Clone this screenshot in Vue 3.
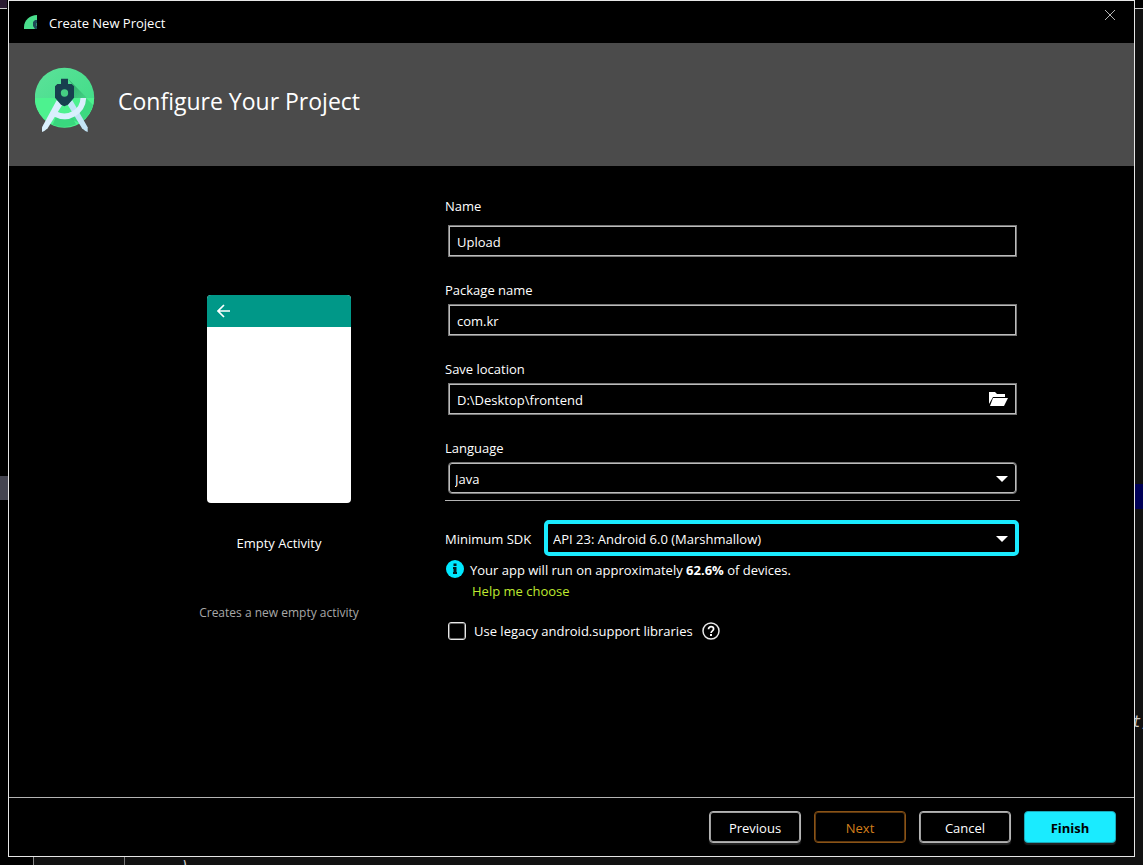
<script setup>
import { ref } from 'vue'

const name = ref('Upload')
const packageName = ref('com.kr')
const location = ref('D:\\Desktop\\frontend')
const language = ref('Java')
const sdk = ref('API 23: Android 6.0 (Marshmallow)')
const legacy = ref(false)
</script>

<template>
  <div class="desktop">
    <div class="backdrop" aria-hidden="true">
      <div class="edge edge-left"></div>
      <div class="edge edge-right"><span class="code code-right">t,</span></div>
      <div class="edge-bottom"><span class="code code-bottom">)</span></div>
    </div>

    <main class="window">
      <header class="titlebar">
        <svg class="app-icon" width="14" height="16" viewBox="0 0 14 16">
          <path d="M0 15V13C0 6 6 1 13 1V15Z" fill="#4ade8c" />
          <path d="M9 8L11 6H13V15H11L9 12Z" fill="#1d4956" />
          <path d="M12 9H13V12H12Z" fill="#2f8f70" />
        </svg>
        <span class="window-title">Create New Project</span>
        <button class="close" type="button" aria-label="Close">
          <svg width="12" height="12" viewBox="0 0 12 12">
            <path d="M1 1L11 11M11 1L1 11" stroke="#b4b4b4" stroke-width="1" />
          </svg>
        </button>
      </header>

      <section class="banner">
        <svg class="logo" width="60" height="66" viewBox="45 21 180 198">
          <defs>
            <linearGradient id="disc" x1="0" y1="0" x2="1" y2="1">
              <stop offset="0" stop-color="#5ce29a" />
              <stop offset="1" stop-color="#3ddc84" />
            </linearGradient>
            <linearGradient id="shade" x1="0" y1="0" x2="1" y2="1">
              <stop offset="0" stop-color="#16794a" stop-opacity="0.65" />
              <stop offset="1" stop-color="#16794a" stop-opacity="0.1" />
            </linearGradient>
          </defs>
          <circle cx="133.500" cy="112" r="89" fill="url(#disc)" />
          <path d="M44.500 114A89 89 0 0 0 222.500 114Z" fill="#4df28f" />
          <path d="M144 56L201 114H162V80Z" fill="url(#shade)" />
          <path d="M198 114L219 135A89 89 0 0 1 178 189L150 176Z" fill="#34cf79" opacity="0.7" />
          <path d="M108 171Q133 184 158 174L168 193Q134 208 98 194Z" fill="#34cf79" opacity="0.8" />
          <path d="M142 133L157 121L203 202V216L196 213L186 205Z" fill="#c3e4f6" />
          <path d="M190 114A57 57 0 0 1 106 162" fill="none" stroke="#d9effd" stroke-width="17" />
          <path d="M110 121L128 133L83 205L73 213L66 216V202Z" fill="#d9effd" />
          <path d="M123 56H144V72H155L162 79V113L144 134L133 139L123 134L105 113V79L112 72H123Z" fill="#17404f" />
          <circle cx="133.500" cy="99" r="11" fill="#45cf83" />
        </svg>
        <h1>Configure Your Project</h1>
      </section>

      <section class="content">
        <aside class="preview">
          <div class="phone">
            <div class="phone-bar">
              <svg width="14" height="14" viewBox="0 0 14 14">
                <path d="M13 7H2M7 1L1 7L7 13" fill="none" stroke="#fff" stroke-width="1.700" />
              </svg>
            </div>
          </div>
          <p class="template-name">Empty Activity</p>
          <p class="template-info">Creates a new empty activity</p>
        </aside>

        <form class="form" @submit.prevent>
          <div class="field first">
            <label for="name">Name</label>
            <input id="name" v-model="name" class="box" type="text" />
          </div>
          <div class="field">
            <label for="package">Package name</label>
            <input id="package" v-model="packageName" class="box" type="text" />
          </div>
          <div class="field">
            <label for="location">Save location</label>
            <div class="control">
              <input id="location" v-model="location" class="box" type="text" />
              <button class="browse" type="button" aria-label="Browse">
                <svg width="19" height="15" viewBox="0 0 19 15">
                  <path d="M0 0H6L8 2H16V5H4L0 12Z" fill="#fff" />
                  <path d="M4 6H19L15 14H1Z" fill="#fff" />
                </svg>
              </button>
            </div>
          </div>
          <div class="field">
            <label for="language">Language</label>
            <div class="control">
              <select id="language" v-model="language" class="box rounded">
                <option>Java</option>
                <option>Kotlin</option>
              </select>
              <svg class="arrow" width="12" height="6" viewBox="0 0 12 6"><path d="M0 0H12L6 6Z" fill="#fff" /></svg>
            </div>
          </div>
          <hr />
          <div class="sdk">
            <label for="sdk">Minimum SDK</label>
            <div class="sdk-control">
              <select id="sdk" v-model="sdk" class="sdk-select">
                <option>API 23: Android 6.0 (Marshmallow)</option>
              </select>
              <svg class="arrow" width="12" height="6" viewBox="0 0 12 6"><path d="M0 0H12L6 6Z" fill="#fff" /></svg>
            </div>
          </div>
          <div class="info">
            <svg width="18" height="18" viewBox="0 0 18 18">
              <circle cx="9" cy="9" r="9" fill="#00e8ff" />
              <path d="M7.500 3.500H10.500V6H7.500ZM7 7H10.500V12H11V14H7V12H7.500V9H7Z" fill="#001a20" />
            </svg>
            <span>Your app will run on approximately <b>62.6%</b> of devices.</span>
          </div>
          <a class="help" href="#">Help me choose</a>
          <div class="legacy">
            <input id="legacy" v-model="legacy" type="checkbox" />
            <label for="legacy">Use legacy android.support libraries</label>
            <button class="hint" type="button" aria-label="Help">
              <svg width="18" height="18" viewBox="0 0 18 18">
                <circle cx="9" cy="9" r="8" fill="none" stroke="#e8e8e8" stroke-width="1.500" />
                <path d="M6.500 7.200C6.500 3.800 11.600 4 11.600 7C11.600 8.800 9.100 8.900 9.100 11" fill="none" stroke="#fff" stroke-width="1.700" />
                <path d="M8 12H10V14H8Z" fill="#fff" />
              </svg>
            </button>
          </div>
        </form>
      </section>

      <footer class="actions">
        <button class="btn" type="button">Previous</button>
        <button class="btn disabled" type="button" disabled>Next</button>
        <button class="btn" type="button">Cancel</button>
        <button class="btn primary" type="button">Finish</button>
      </footer>
    </main>
  </div>
</template>

<style>
body {
  background: #000;
}
</style>

<style scoped>
.desktop {
  position: relative;
  box-sizing: border-box;
  min-height: 100vh;
  padding: 0 8px 8px;
  display: flex;
  overflow: hidden;
  background: #000;
  color: #fff;
  font: 13px/20px "Open Sans", "Noto Sans", sans-serif;
}
.desktop *,
.desktop *::before {
  box-sizing: border-box;
}
.backdrop {
  position: absolute;
  inset: 0;
}
.edge {
  position: absolute;
  top: 0;
  bottom: 0;
  width: 8px;
}
.edge-left {
  left: 0;
  background:
    linear-gradient(#c8c8c8, #c8c8c8) 0 8px / 7px 1px no-repeat,
    linear-gradient(#2a1b31, #2a1b31) 0 0 / 7px 8px no-repeat,
    linear-gradient(#444450, #444450) 0 476px / 8px 24px no-repeat;
}
.edge-right {
  right: 0;
  overflow: hidden;
  background:
    linear-gradient(#000, #000) 0 0 / 8px 8px no-repeat,
    linear-gradient(#c8c8c8, #c8c8c8) 0 8px / 8px 1px no-repeat,
    linear-gradient(#000058, #000058) 0 484px / 8px 25px no-repeat,
    #111;
}
.edge-bottom {
  position: absolute;
  left: 33px;
  right: 0;
  bottom: 0;
  height: 8px;
  overflow: hidden;
  border-left: 1px solid #888;
  background: linear-gradient(#777, #777) 90px 0 / 1px 8px no-repeat, #111;
}
.code {
  position: absolute;
  color: #ccc;
  font: italic 15px/16px "DejaVu Sans Mono", monospace;
}
.code-right {
  top: 714px;
  left: -3px;
}
.code-bottom {
  top: 2px;
  left: 146px;
}
.window {
  position: relative;
  flex: 1;
  display: flex;
  flex-direction: column;
  border: 1px solid #e6e6e6;
  background: #000;
}
.titlebar {
  display: flex;
  align-items: center;
  height: 42px;
  padding: 0 18px 0 15px;
}
.window-title {
  margin-left: 11px;
  padding-top: 2px;
  flex: 1;
}
button {
  font: inherit;
  color: inherit;
}
.close,
.browse,
.hint {
  display: flex;
  padding: 0;
  border: 0;
  background: none;
}
.close {
  align-self: flex-start;
  margin-top: 8px;
}
.banner {
  display: flex;
  align-items: center;
  height: 123px;
  padding: 0 26px;
  background: #4b4b4b;
}
.logo {
  margin-bottom: 10px;
}
h1 {
  margin: 0 0 8px 23px;
  font-size: 23px;
  font-weight: 400;
  line-height: 32px;
}
.content {
  flex: 1;
  display: flex;
  padding: 30px 114px 30px 104px;
}
.preview {
  width: 332px;
  padding-top: 99px;
  display: flex;
  flex-direction: column;
  align-items: center;
}
.phone {
  width: 144px;
  height: 208px;
  overflow: hidden;
  border-radius: 4px;
  background: #fff;
}
.phone-bar {
  display: flex;
  align-items: center;
  height: 32px;
  padding-left: 10px;
  background: #009888;
}
.template-name {
  margin: 30px 0 50px;
}
.template-info {
  margin: 0;
  color: #a8a8a8;
  font-size: 12px;
}
.form {
  flex: 1;
  min-width: 0;
}
label {
  display: block;
}
.field {
  display: flex;
  flex-direction: column;
  gap: 4px;
  margin-bottom: 23px;
}
.first {
  gap: 9px;
}
.field .box {
  height: 32px;
  margin: 0 3px;
  padding: 1px 8px 0;
  border: 1px solid #787878;
  border-radius: 0;
  outline: 0;
  box-shadow: inset 0 0 0 1px #bcbcbc;
  background: #000;
  color: #fff;
  font: inherit;
}
.control,
.sdk-control {
  position: relative;
  display: flex;
}
.control .box {
  flex: 1;
  min-width: 0;
}
.field .rounded {
  appearance: none;
  padding-left: 6px;
  border-radius: 4px;
}
.browse {
  position: absolute;
  right: 12px;
  top: 9px;
}
.arrow {
  position: absolute;
  right: 12px;
  top: 14px;
  pointer-events: none;
}
hr {
  height: 1px;
  margin: -17px 0 19px;
  border: 0;
  background: #b4b4b4;
}
.sdk {
  display: flex;
  align-items: center;
}
.sdk label {
  width: 99px;
  padding-top: 2px;
}
.sdk-control {
  flex: 1;
  margin-right: 1px;
}
.sdk-select {
  flex: 1;
  height: 36px;
  padding: 1px 5px 0;
  appearance: none;
  border: 4px solid #1aebff;
  border-radius: 5px;
  outline: 0;
  background: #000;
  color: #fff;
  font: inherit;
}
.sdk-control .arrow {
  right: 11px;
  top: 16px;
}
.info {
  display: flex;
  align-items: flex-start;
  gap: 6px;
  margin-top: 4px;
  padding-left: 1px;
}
.help {
  display: table;
  margin: 1px 0 0 27px;
  color: #bfe92f;
  text-decoration: none;
}
.legacy {
  display: flex;
  align-items: center;
  margin: 20px 0 0 3px;
}
.legacy input {
  appearance: none;
  width: 18px;
  height: 18px;
  margin: 0 8px 0 0;
  border: 1px solid #e8e8e8;
  border-radius: 3px;
  box-shadow: inset 0 0 0 1px #666;
  background: #000;
}
.hint {
  margin-left: 9px;
}
.actions {
  display: flex;
  justify-content: flex-end;
  gap: 13px;
  padding: 13px 18px;
  border-top: 1px solid #b4b4b4;
}
.btn {
  width: 92px;
  height: 32px;
  padding: 1px 0 0;
  border: 1px solid #b4b4b4;
  border-radius: 4px;
  background: #000;
  box-shadow: inset 0 0 0 1px #a0a0a0, 0 2px 1px #222;
}
.disabled {
  border-color: #8a5316;
  color: #d47f1c;
  box-shadow: inset 0 0 0 1px #5c370f;
}
.primary {
  border-color: #1aa8b8;
  background: #1aebff;
  color: #000;
  font-weight: 700;
  box-shadow: 0 2px 1px #222;
}
</style>
